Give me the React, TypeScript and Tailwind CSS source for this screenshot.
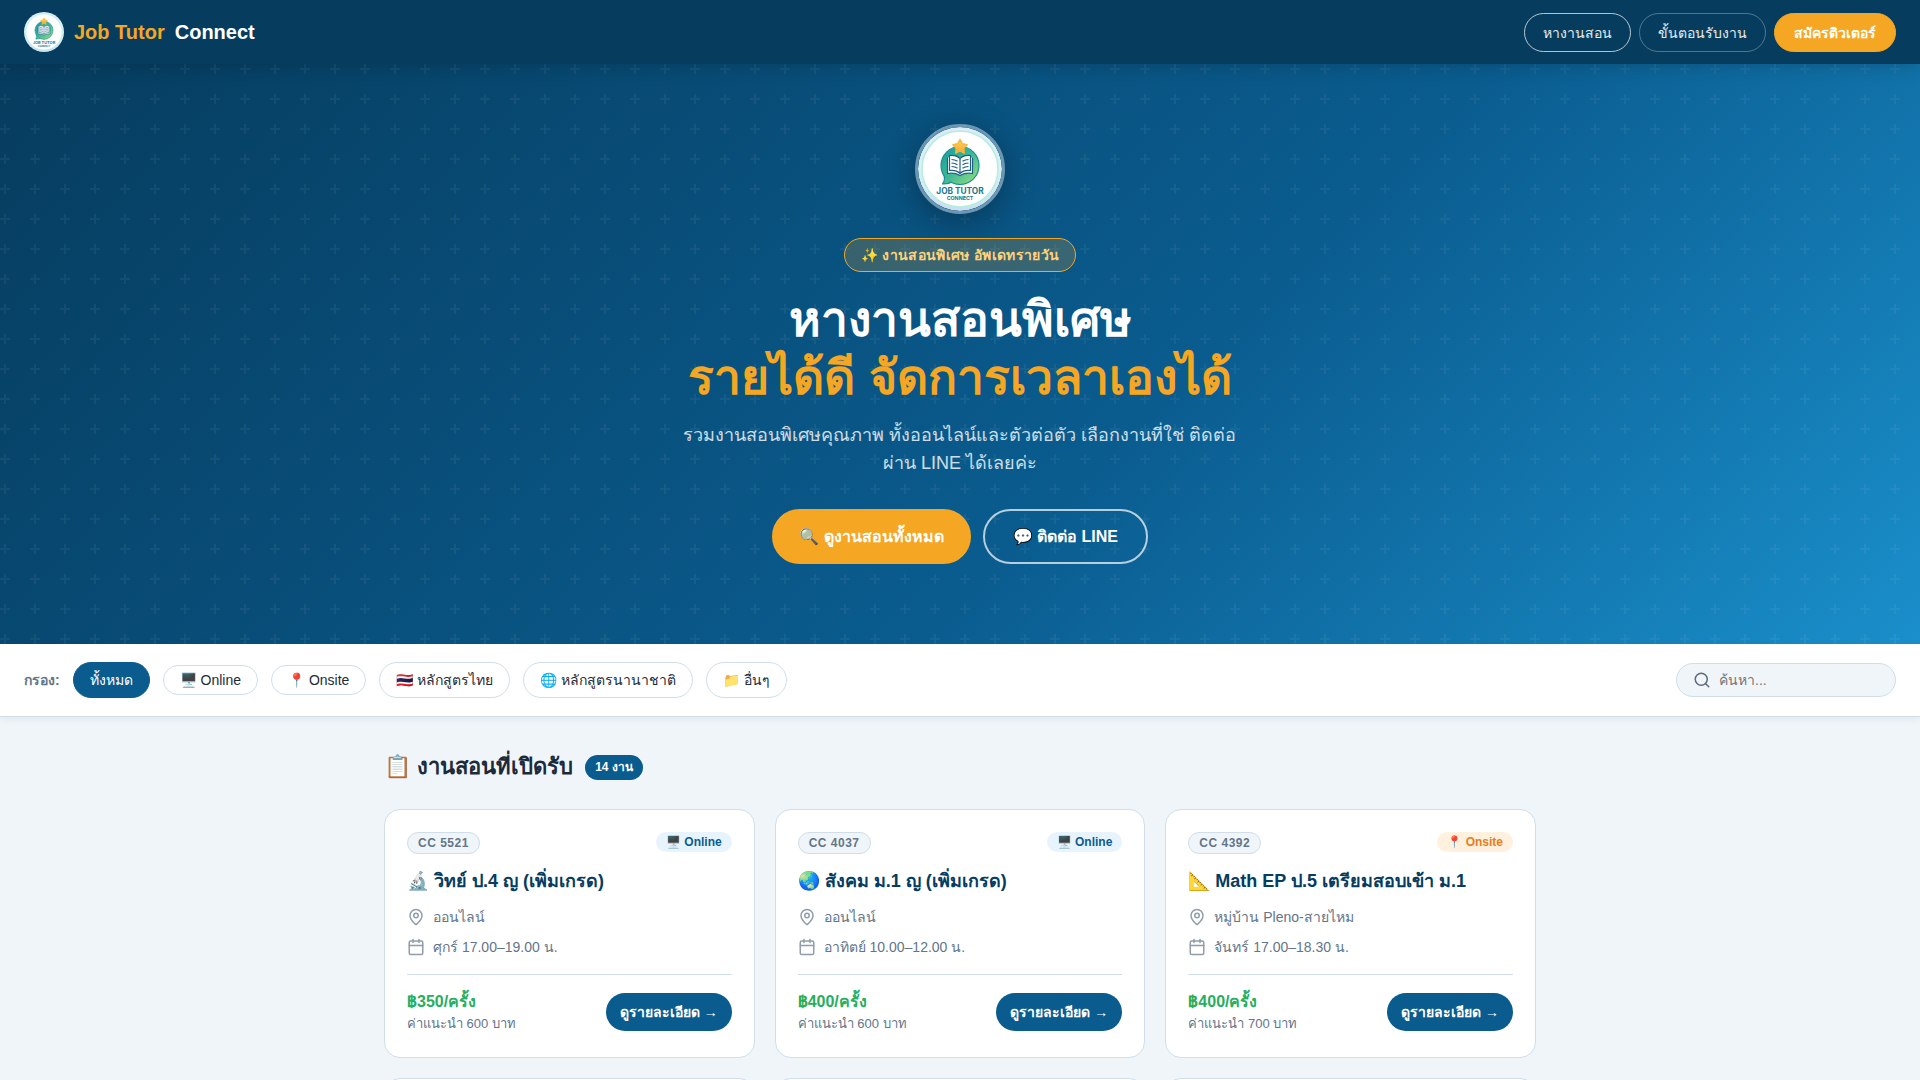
import { Calendar, MapPin, Search } from "lucide-react";
import { clsx } from "clsx";

type Job = {
  code: string;
  mode: "online" | "onsite";
  emoji: string;
  title: string;
  place: string;
  time: string;
  price: string;
  fee: string;
};

const jobs: Job[] = [
  {
    code: "CC 5521",
    mode: "online",
    emoji: "🔬",
    title: "วิทย์ ป.4 ญ (เพิ่มเกรด)",
    place: "ออนไลน์",
    time: "ศุกร์ 17.00–19.00 น.",
    price: "฿350/ครั้ง",
    fee: "ค่าแนะนำ 600 บาท",
  },
  {
    code: "CC 4037",
    mode: "online",
    emoji: "🌏",
    title: "สังคม ม.1 ญ (เพิ่มเกรด)",
    place: "ออนไลน์",
    time: "อาทิตย์ 10.00–12.00 น.",
    price: "฿400/ครั้ง",
    fee: "ค่าแนะนำ 600 บาท",
  },
  {
    code: "CC 4392",
    mode: "onsite",
    emoji: "📐",
    title: "Math EP ป.5 เตรียมสอบเข้า ม.1",
    place: "หมู่บ้าน Pleno-สายไหม",
    time: "จันทร์ 17.00–18.30 น.",
    price: "฿400/ครั้ง",
    fee: "ค่าแนะนำ 700 บาท",
  },
];

const filters = ["ทั้งหมด", "🖥️ Online", "📍 Onsite", "🇹🇭 หลักสูตรไทย", "🌐 หลักสูตรนานาชาติ", "📁 อื่นๆ"];

const pending = [1, 2, 3];

function Logo({ className }: { className?: string }) {
  return (
    <svg viewBox="0 0 84 84" className={className} aria-hidden="true">
      <defs>
        <linearGradient id="bubble" x1="0" y1="0" x2="1" y2="1">
          <stop offset="0" stopColor="#149a9c" />
          <stop offset="0.5" stopColor="#3fb995" />
          <stop offset="1" stopColor="#9be07c" />
        </linearGradient>
        <linearGradient id="star" x1="0" y1="0" x2="0" y2="1">
          <stop offset="0" stopColor="#ffd75e" />
          <stop offset="1" stopColor="#f5a52a" />
        </linearGradient>
        <linearGradient id="rim" x1="0" y1="0" x2="0" y2="1">
          <stop offset="0" stopColor="#dcebf8" />
          <stop offset="0.5" stopColor="#d9f3f0" />
          <stop offset="1" stopColor="#c9def0" />
        </linearGradient>
      </defs>
      <circle cx="42" cy="42" r="42" fill="url(#rim)" />
      <circle cx="42" cy="42" r="38" fill="#fff" stroke="#b5ece2" strokeWidth="1.5" />
      <path d="M26 48c1 4 .5 6.500-1.500 8.800 4 .5 7.500-.6 10.500-2.300z" fill="#45b99a" stroke="#1b8f92" strokeWidth="1.2" strokeLinejoin="round" />
      <circle cx="42" cy="38.5" r="19" fill="url(#bubble)" stroke="#1b8f92" strokeWidth="1.2" />
      <path d="M27 49l2.500 3 4 2-6 2z" fill="#45b99a" />
      <path d="M29.500 30.500v16c5-.8 9 0 12.500 2 3.500-2 7.500-2.800 12.500-2v-16" fill="#fff" stroke="#1d5f86" strokeWidth="1.2" />
      <path
        d="M31.500 28.500c4-.5 8 .5 10.500 3 2.500-2.500 6.500-3.500 10.500-3v15c-4-.5-8 .5-10.500 3-2.500-2.500-6.500-3.500-10.500-3z"
        fill="#fff"
        stroke="#1d5f86"
        strokeWidth="1.2"
        strokeLinejoin="round"
      />
      <path
        d="M42 32v14M33.500 32.500q3.500 0 6 1.800M33.500 36q3.500 0 6 1.800M33.500 39.500q3.500 0 6 1.800M50.500 32.500q-3.500 0-6 1.800M50.500 36q-3.500 0-6 1.800M50.500 39.500q-3.500 0-6 1.800"
        fill="none"
        stroke="#1d5f86"
        strokeWidth="1.2"
      />
      <path
        d="M42 12.500l2.300 4.300 4.800.9-3.400 3.500.6 4.800-4.300-2.100-4.300 2.100.6-4.800-3.400-3.500 4.800-.9z"
        fill="url(#star)"
        stroke="#f7b640"
        strokeWidth="1.5"
        strokeLinejoin="round"
      />
      <text x="42" y="66.5" textAnchor="middle" fontSize="8.3" fontWeight="700" fill="#17788a" fontFamily="Inter, sans-serif">
        JOB TUTOR
      </text>
      <text x="42" y="73" textAnchor="middle" fontSize="5.3" fontWeight="700" fill="#17788a" fontFamily="Inter, sans-serif">
        CONNECT
      </text>
    </svg>
  );
}

function PlusPattern() {
  return (
    <svg className="absolute inset-0 h-full w-full" aria-hidden="true">
      <defs>
        <pattern id="plus" width="30" height="30" patternUnits="userSpaceOnUse">
          <path d="M6 4V0H4v4H0v2h4v4h2V6h4V4H6z" fill="#fff" fillOpacity="0.05" />
        </pattern>
      </defs>
      <rect width="100%" height="100%" fill="url(#plus)" />
    </svg>
  );
}

function Navbar() {
  return (
    <header className="relative z-10 flex h-16 items-center justify-between bg-[#063c5e] px-6 shadow-[0_2px_16px_rgba(0,0,0,0.18)]">
      <a href="#" className="flex items-center gap-2.5 text-xl font-bold text-white">
        <Logo className="h-10 w-10" />
        <span className="text-[#f5a623]">Job Tutor</span>
        <span>Connect</span>
      </a>
      <nav className="flex items-center gap-2 text-sm leading-[21px]">
        <a href="#jobs" className="rounded-full border border-white/70 px-[18px] pt-[9px] pb-[7px] text-white/90">
          หางานสอน
        </a>
        <a href="#steps" className="rounded-full border border-white/30 px-[18px] pt-[9px] pb-[7px] text-white/90">
          ขั้นตอนรับงาน
        </a>
        <a href="#register" className="rounded-full border border-[#f5a623] bg-[#f5a623] px-[19px] pt-[9px] pb-[7px] font-bold text-white">
          สมัครติวเตอร์
        </a>
      </nav>
    </header>
  );
}

function Hero() {
  return (
    <section className="relative bg-[linear-gradient(135deg,#063c5e_0%,#0a5c8f_60%,#1a8fcb_100%)] px-6 pt-15 pb-20 text-center">
      <PlusPattern />
      <div className="relative flex flex-col items-center">
        <Logo className="mb-6 h-[90px] w-[90px] rounded-full border-3 border-white/40 shadow-[0_8px_32px_rgba(0,0,0,0.3)]" />
        <span className="mb-[19px] rounded-full border border-[#f5a623] bg-[#f5a623]/20 px-4 py-1.5 text-sm leading-5 font-semibold tracking-wide text-[#ffd27a]">
          ✨ งานสอนพิเศษ อัพเดทรายวัน
        </span>
        <h1 className="mb-3.5 text-5xl leading-[58px] font-bold text-white">
          หางานสอนพิเศษ
          <br />
          <span className="text-[#f5a623]">รายได้ดี จัดการเวลาเองได้</span>
        </h1>
        <p className="mb-8 max-w-[560px] text-lg leading-7 text-white/80">
          รวมงานสอนพิเศษคุณภาพ ทั้งออนไลน์และตัวต่อตัว เลือกงานที่ใช่ ติดต่อผ่าน LINE ได้เลยค่ะ
        </p>
        <div className="flex flex-wrap justify-center gap-3 text-base font-bold text-white">
          <a href="#jobs" className="rounded-full border-2 border-[#f5a623] bg-[#f5a623] px-[25px] py-3 leading-[27px]">
            🔍 ดูงานสอนทั้งหมด
          </a>
          <a href="#line" className="rounded-full border-2 border-white/70 px-7 py-3 leading-[27px]">
            💬 ติดต่อ LINE
          </a>
        </div>
      </div>
    </section>
  );
}

function FilterBar() {
  return (
    <div className="relative flex items-center justify-between border-b border-[#cfdeea] bg-white px-6 py-[18px] shadow-[0_2px_8px_rgba(6,60,94,0.08)]">
      <div className="flex items-center gap-[13px]">
        <span className="text-sm font-semibold text-[#637588]">กรอง:</span>
        {filters.map((label, i) => (
          <button
            key={label}
            type="button"
            className={clsx(
              "rounded-full border px-4 py-1.5 text-sm leading-[normal]",
              i === 0 ? "border-[#0a5c8f] bg-[#0a5c8f] text-white" : "border-[#cfdeea] bg-white text-[#1c2b3a]"
            )}
          >
            {label}
          </button>
        ))}
      </div>
      <label className="flex h-[34px] w-[220px] items-center gap-2 rounded-full border border-[#cfdeea] bg-[#f0f5fa] px-4">
        <Search className="h-[18px] w-[18px] shrink-0 text-[#5a6b7e]" aria-label="ค้นหา" />
        <input type="search" placeholder="ค้นหา..." className="w-full min-w-0 bg-transparent text-sm outline-none placeholder:text-[#757575]" />
      </label>
    </div>
  );
}

function JobCard({ job }: { job: Job }) {
  return (
    <article className="rounded-2xl border border-[#cfdeea] bg-white p-[22px]">
      <div className="flex h-[22px] items-start justify-between">
        <span className="rounded-full border border-[#cfdeea] bg-[#f0f5fa] px-2.5 text-xs leading-5 font-bold tracking-[0.5px] text-[#637588]">
          {job.code}
        </span>
        <span
          className={clsx(
            "rounded-full px-2.5 text-xs leading-5 font-semibold",
            job.mode === "online" ? "bg-[#e8f4fd] text-[#0a5c8f]" : "bg-[#fff1de] text-[#e67e22]"
          )}
        >
          {job.mode === "online" ? "🖥️ Online" : "📍 Onsite"}
        </span>
      </div>
      <h3 className="mt-[13px] text-lg leading-7 font-bold text-[#063c5e]">
        {job.emoji} {job.title}
      </h3>
      <ul className="mt-[11px] space-y-2 text-sm leading-[22px] text-[#637588]">
        <li className="flex items-center gap-2">
          <MapPin className="h-[18px] w-[18px] opacity-70" />
          {job.place}
        </li>
        <li className="flex items-center gap-2">
          <Calendar className="h-[18px] w-[18px] opacity-70" />
          {job.time}
        </li>
      </ul>
      <div className="mt-4 flex items-center justify-between border-t border-[#cfdeea] pt-[15px] pb-px">
        <div>
          <div className="text-base leading-6 font-bold text-[#27ae60]">{job.price}</div>
          <div className="text-[13px] leading-5 text-[#637588]">{job.fee}</div>
        </div>
        <button type="button" className="rounded-full bg-[#0a5c8f] px-3.5 py-2 text-sm leading-[22px] font-bold text-white">
          ดูรายละเอียด →
        </button>
      </div>
    </article>
  );
}

export default function App() {
  return (
    <div className="h-screen overflow-hidden bg-[#f0f5fa] font-['Liberation_Sans',sans-serif] text-[#1c2b3a]">
      <Navbar />
      <Hero />
      <FilterBar />
      <main id="jobs" className="mx-auto max-w-[1200px] px-6 pt-8">
        <div className="mb-6 flex items-center gap-3">
          <h2 className="text-[22px] leading-9 font-bold">📋 งานสอนที่เปิดรับ</h2>
          <span className="rounded-full bg-[#0a5c8f] px-2.5 text-xs leading-[25px] font-semibold text-white">14 งาน</span>
        </div>
        <div className="grid grid-cols-3 gap-5">
          {jobs.map((job) => (
            <JobCard key={job.code} job={job} />
          ))}
          {pending.map((n) => (
            <div key={n} className="h-60 rounded-2xl border border-[#cfdeea] bg-white" />
          ))}
        </div>
      </main>
    </div>
  );
}
